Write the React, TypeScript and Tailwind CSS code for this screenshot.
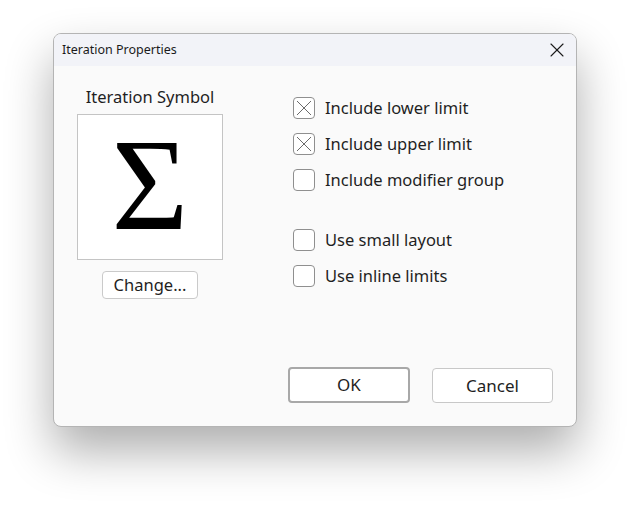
import { X } from "lucide-react";

const options = [
  { label: "Include lower limit", checked: true },
  { label: "Include upper limit", checked: true },
  { label: "Include modifier group", checked: false },
];

const layoutOptions = [
  { label: "Use small layout", checked: false },
  { label: "Use inline limits", checked: false },
];

function CheckRow({ label, checked }: { label: string; checked: boolean }) {
  return (
    <div className="flex items-center gap-[10px] h-[22px]">
      <div className="w-[22px] h-[22px] rounded-[4px] border border-[#8f8f8f] bg-white flex items-center justify-center">
        {checked && (
          <svg width="18" height="18" viewBox="0 0 18 18">
            <path d="M2 2 L16 16 M16 2 L2 16" stroke="#6b6b6b" strokeWidth="1" />
          </svg>
        )}
      </div>
      <span className="text-[16.5px] text-[#1f1f1f]">{label}</span>
    </div>
  );
}

export default function App() {
  return (
    <div
      className="w-[632px] h-[518px] bg-white pt-[33px] pl-[53px]"
      style={{ fontFamily: '"Noto Sans", "Open Sans", sans-serif' }}
    >
      <div className="w-[524px] h-[394px] rounded-[8px] border border-[#b4b4b4] bg-[#fafafa] shadow-[0_24px_48px_rgba(0,0,0,0.32)] flex flex-col overflow-hidden">
        {/* Title bar */}
        <div className="h-[32px] bg-[#f2f3f8] flex items-center justify-between pl-[8px] pr-[7px]">
          <span className="text-[12.5px] text-[#1b1b1b]">Iteration Properties</span>
          <X className="w-[24px] h-[24px] text-[#1b1b1b]" strokeWidth={1.1} />
        </div>

        {/* Body */}
        <div className="flex-1 flex flex-col">
          <div className="flex pt-[20px]">
            <div className="ml-[23px] w-[146px] flex flex-col items-center">
              <span className="text-[16.5px] leading-[22px] text-[#1f1f1f]">Iteration Symbol</span>
              <div className="mt-[6px] w-[146px] h-[146px] border border-[#c4c4c4] bg-white flex items-center justify-center">
                <span
                  className="text-[132px] leading-none text-black -mt-[5px]"
                  style={{ fontFamily: '"Liberation Serif", "DejaVu Serif", serif' }}
                >
                  Σ
                </span>
              </div>
              <button className="mt-[11px] h-[28px] px-[11px] rounded-[4px] border border-[#cacaca] bg-white text-[16.5px] leading-none text-[#1f1f1f]">
                Change...
              </button>
            </div>

            <div className="ml-[70px] pt-[11px] flex flex-col">
              <div className="flex flex-col gap-[14px]">
                {options.map((o) => (
                  <CheckRow key={o.label} label={o.label} checked={o.checked} />
                ))}
              </div>
              <div className="mt-[38px] flex flex-col gap-[14px]">
                {layoutOptions.map((o) => (
                  <CheckRow key={o.label} label={o.label} checked={o.checked} />
                ))}
              </div>
            </div>
          </div>

          <div className="mt-auto flex justify-end gap-[22px] pr-[23px] pb-[23px]">
            <button className="w-[122px] h-[36px] rounded-[4px] border-2 border-[#a8a8a8] bg-white text-[17px] text-[#1f1f1f]">
              OK
            </button>
            <button className="w-[121px] h-[35px] mt-[1px] rounded-[4px] border border-[#c8c8c8] bg-white text-[17px] text-[#1f1f1f]">
              Cancel
            </button>
          </div>
        </div>
      </div>
    </div>
  );
}
